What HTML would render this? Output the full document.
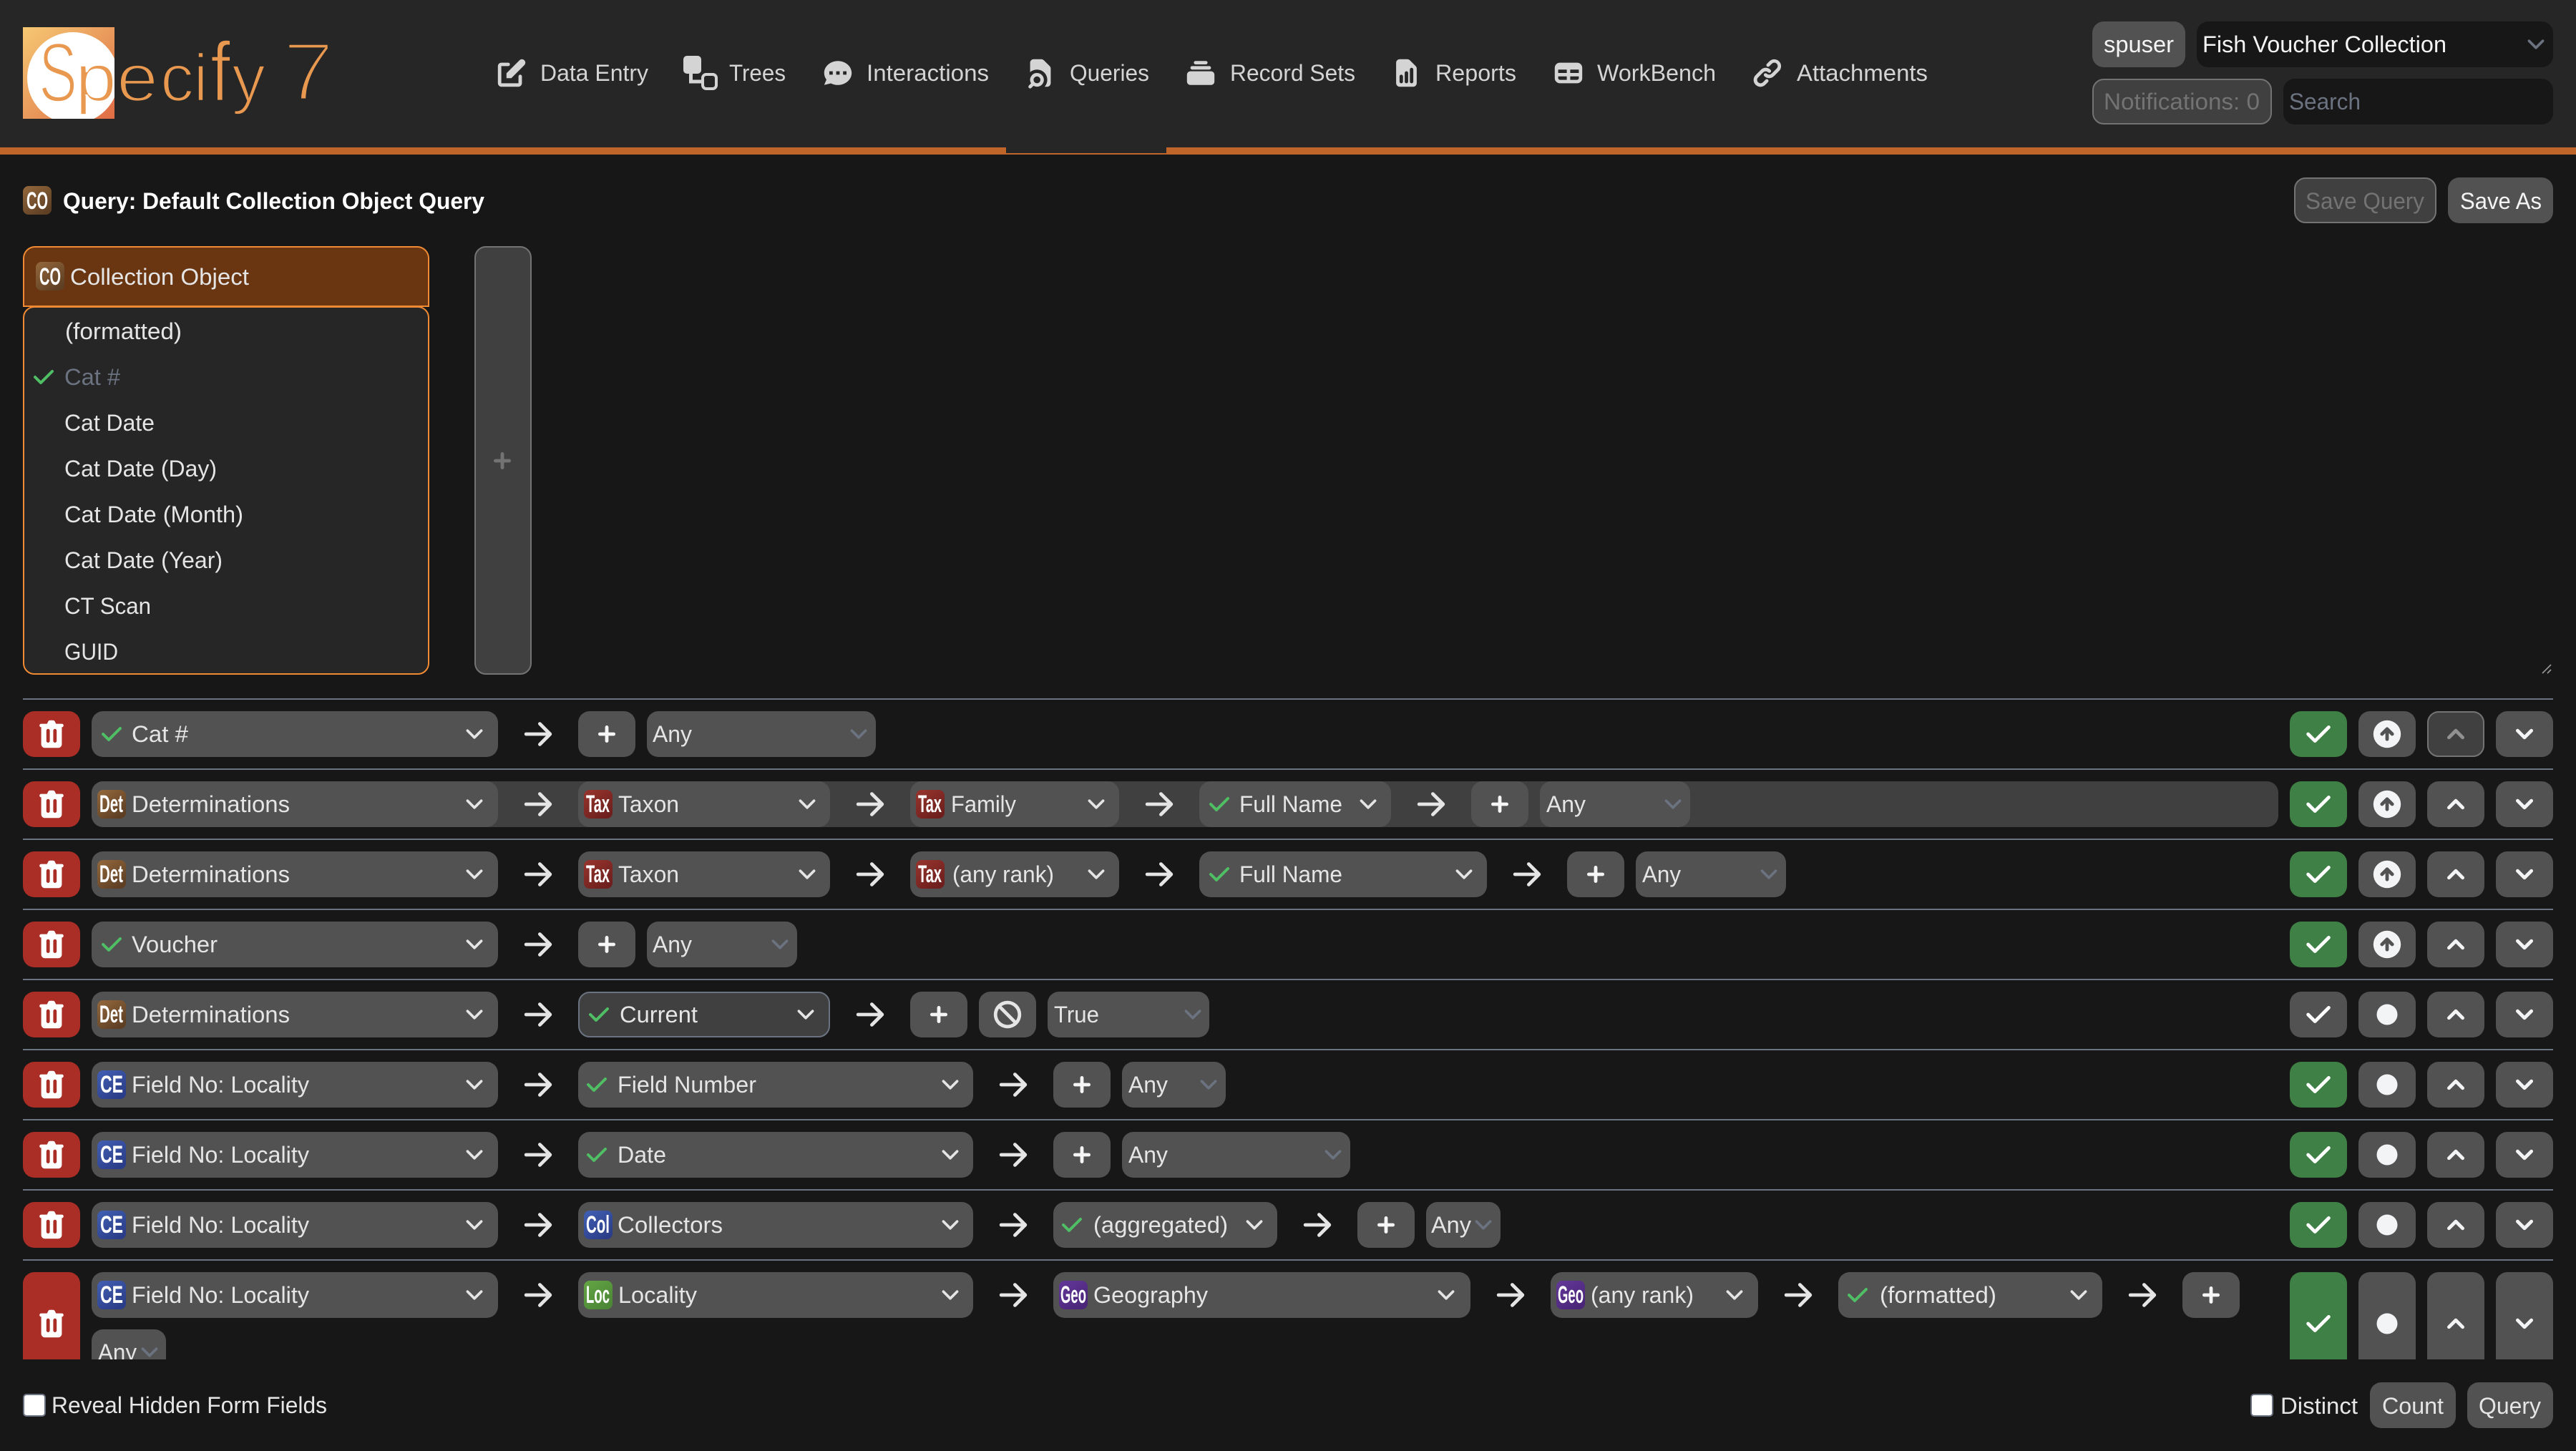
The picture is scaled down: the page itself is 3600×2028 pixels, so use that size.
<!DOCTYPE html>
<html lang="en"><head><meta charset="utf-8"><title>Specify 7</title>
<style>
html,body{margin:0;padding:0;background:#171717;width:3600px;height:2028px;overflow:hidden}
svg{display:block}
text{font:32px "Liberation Sans",Arial,sans-serif;fill:#e5e5e5}
.n{fill:#d4d4d4}
.b{font-weight:700;fill:#fff}
.w{fill:#f5f5f5}
.dim{fill:#737373}
.ph{fill:#6b7280}
.ic{font-weight:700;font-size:34px;fill:#fff}
.s{fill:#525252}
.del{fill:#aa2e26}
.grn{fill:#3f8046}
.cw{stroke:#e5e5e5}
.cg{stroke:#6b7280}
.lg{fill:#e9984f}
</style></head><body>
<svg xmlns="http://www.w3.org/2000/svg" width="3600" height="2028" viewBox="0 0 3600 2028">
<defs>
<linearGradient id="lg" x1="0" y1="0" x2="1" y2="1"><stop offset="0" stop-color="#f6c873"/><stop offset=".5" stop-color="#e99a5c"/><stop offset="1" stop-color="#e06c45"/></linearGradient>
<linearGradient id="gCO" x1="0" y1="0" x2=".7" y2="1"><stop offset="0" stop-color="#94683c"/><stop offset="1" stop-color="#5e3f24"/></linearGradient>
<linearGradient id="gTax" x1="0" y1="0" x2=".7" y2="1"><stop offset="0" stop-color="#97352e"/><stop offset="1" stop-color="#6e1f1d"/></linearGradient>
<linearGradient id="gCE" x1="0" y1="0" x2=".7" y2="1"><stop offset="0" stop-color="#4260b4"/><stop offset="1" stop-color="#2b3d88"/></linearGradient>
<linearGradient id="gLoc" x1="0" y1="0" x2=".7" y2="1"><stop offset="0" stop-color="#64a544"/><stop offset="1" stop-color="#4c8736"/></linearGradient>
<linearGradient id="gGeo" x1="0" y1="0" x2=".7" y2="1"><stop offset="0" stop-color="#64399a"/><stop offset="1" stop-color="#4a2578"/></linearGradient>
<clipPath id="cl"><rect x="32" y="38" width="128" height="128"/></clipPath>

<path id="trash" fill="#fff" transform="scale(2.4)" fill-rule="evenodd" d="M9 2a1 1 0 00-.894.553L7.382 4H4a1 1 0 000 2v10a2 2 0 002 2h8a2 2 0 002-2V6a1 1 0 100-2h-3.382l-.724-1.447A1 1 0 0011 2H9zM7 8a1 1 0 012 0v6a1 1 0 11-2 0V8zm5-1a1 1 0 00-1 1v6a1 1 0 102 0V8a1 1 0 00-1-1z"/>
<path id="upc" fill="#f3f4f6" transform="scale(2.4)" fill-rule="evenodd" d="M10 18a8 8 0 100-16 8 8 0 000 16zm3.707-8.707l-3-3a1 1 0 00-1.414 0l-3 3a1 1 0 001.414 1.414L9 9.414V13a1 1 0 102 0V9.414l1.293 1.293a1 1 0 001.414-1.414z"/>
<path id="chk" fill="#fff" transform="scale(2.4)" d="M16.707 5.293a1 1 0 010 1.414l-8 8a1 1 0 01-1.414 0l-4-4a1 1 0 011.414-1.414L8 12.586l7.293-7.293a1 1 0 011.414 0z"/>
<path id="chk2" fill="#4fbe64" transform="scale(2)" d="M16.707 5.293a1 1 0 010 1.414l-8 8a1 1 0 01-1.414 0l-4-4a1 1 0 011.414-1.414L8 12.586l7.293-7.293a1 1 0 011.414 0z"/>
<path id="up" fill="#f3f4f6" transform="scale(2.4)" d="M14.707 12.707a1 1 0 01-1.414 0L10 9.414l-3.293 3.293a1 1 0 01-1.414-1.414l4-4a1 1 0 011.414 0l4 4a1 1 0 010 1.414z"/>
<path id="dn" fill="#f3f4f6" transform="scale(2.4)" d="M5.293 7.293a1 1 0 011.414 0L10 10.586l3.293-3.293a1 1 0 111.414 1.414l-4 4a1 1 0 01-1.414 0l-4-4a1 1 0 010-1.414z"/>
<path id="plus" transform="scale(2.4)" d="M10 5a1 1 0 011 1v3h3a1 1 0 110 2h-3v3a1 1 0 11-2 0v-3H6a1 1 0 110-2h3V6a1 1 0 011-1z"/>
<path id="arr" fill="#e5e5e5" transform="scale(2.4)" d="M10.293 3.293a1 1 0 011.414 0l6 6a1 1 0 010 1.414l-6 6a1 1 0 01-1.414-1.414L14.586 11H3a1 1 0 110-2h11.586l-4.293-4.293a1 1 0 010-1.414z"/>
<path id="ban" fill="#e5e5e5" transform="scale(2.4)" fill-rule="evenodd" d="M13.477 14.89A6 6 0 015.11 6.524l8.367 8.368zm1.414-1.414L6.524 5.11a6 6 0 018.367 8.367zM18 10a8 8 0 11-16 0 8 8 0 0116 0z"/>
<path id="cv" fill="none" stroke-width="1.5" stroke-linecap="round" stroke-linejoin="round" transform="scale(2.4)" d="M6 8l4 4 4-4"/>

<g id="del"><rect x="32" width="80" height="64" rx="16" class="del"/><use href="#trash" x="48" y="8"/></g>
<g id="pb"><rect width="80" height="64" rx="16" class="s"/><use href="#plus" x="16" y="8" fill="#f5f5f5"/></g>
<g id="ud">
<rect x="3392" width="80" height="64" rx="16" class="s"/><use href="#up" x="3408" y="8"/>
<rect x="3488" width="80" height="64" rx="16" class="s"/><use href="#dn" x="3504" y="8"/>
</g>
<g id="a1">
<rect x="3200" width="80" height="64" rx="16" class="grn"/><use href="#chk" x="3216" y="8"/>
<rect x="3296" width="80" height="64" rx="16" class="s"/><use href="#upc" x="3312" y="8"/>
<use href="#ud"/>
</g>
<g id="a2">
<rect x="3200" width="80" height="64" rx="16" class="grn"/><use href="#chk" x="3216" y="8"/>
<rect x="3296" width="80" height="64" rx="16" class="s"/><circle cx="3336" cy="32" r="14.5" fill="#f3f4f6"/>
<use href="#ud"/>
</g>
<g id="s1"><rect x="128" width="568" height="64" rx="16" class="s"/><use href="#cv" class="cw" x="639" y="8"/></g>
</defs>

<rect width="3600" height="2028" fill="#171717"/>
<!-- header -->
<rect width="3600" height="206" fill="#262626"/>
<rect y="206" width="3600" height="10" fill="#c0652a"/>
<rect x="1406" y="206" width="224" height="8" fill="#262626"/>

<!-- logo -->
<rect x="32" y="38" width="128" height="128" fill="url(#lg)"/>
<circle cx="102" cy="109" r="64" fill="#fff" clip-path="url(#cl)"/>
<g clip-path="url(#cl)">
<text class="lg" x="54" y="142" style="font-size:118px;stroke:#fff;stroke-width:3.5" textLength="54" lengthAdjust="spacingAndGlyphs">S</text>
<text class="lg" x="105" y="141" style="font-size:94px;stroke:#fff;stroke-width:2.6" textLength="58" lengthAdjust="spacingAndGlyphs">p</text>
</g>
<text class="lg" x="163" y="141" style="font-size:94px;stroke:#262626;stroke-width:2.8" textLength="58" lengthAdjust="spacingAndGlyphs">e</text>
<text class="lg" x="224" y="141" style="font-size:94px;stroke:#262626;stroke-width:2.8" textLength="47" lengthAdjust="spacingAndGlyphs">c</text>
<text class="lg" x="271" y="141" style="font-size:94px;stroke:#262626;stroke-width:2.4" textLength="19" lengthAdjust="spacingAndGlyphs">i</text>
<text class="lg" x="294" y="141" style="font-size:118px;stroke:#262626;stroke-width:2.6" textLength="28" lengthAdjust="spacingAndGlyphs">f</text>
<text class="lg" x="324" y="141" style="font-size:94px;stroke:#262626;stroke-width:2.8" textLength="47" lengthAdjust="spacingAndGlyphs">y</text>
<text class="lg" x="395" y="140" style="font-size:116px;stroke:#262626;stroke-width:5" textLength="72" lengthAdjust="spacingAndGlyphs">7</text>

<!-- nav -->
<g fill="#d4d4d4">
<g transform="translate(691,78) scale(2.4)"><path d="M17.414 2.586a2 2 0 00-2.828 0L7 10.172V13h2.828l7.586-7.586a2 2 0 000-2.828z"/><path fill-rule="evenodd" d="M2 6a2 2 0 012-2h4a1 1 0 010 2H4v10h10v-4a1 1 0 112 0v4a2 2 0 01-2 2H4a2 2 0 01-2-2V6z"/></g>
<rect x="955" y="78" width="25" height="25" rx="5"/>
<path d="M965.5 102V114H983" fill="none" stroke="#d4d4d4" stroke-width="5"/>
<rect x="982" y="104" width="19" height="20" rx="5" fill="none" stroke="#d4d4d4" stroke-width="4"/>
<path transform="translate(1147,78) scale(2.4)" fill-rule="evenodd" d="M18 10c0 3.866-3.582 7-8 7a8.841 8.841 0 01-4.083-.98L2 17l1.338-3.123C2.493 12.767 2 11.434 2 10c0-3.866 3.582-7 8-7s8 3.134 8 7zM7 9H5v2h2V9zm8 0h-2v2h2V9zM9 9h2v2H9V9z"/>
<g transform="translate(1430,78) scale(2.4)"><path d="M4 4a2 2 0 012-2h4.586A2 2 0 0112 2.586L15.414 6A2 2 0 0116 7.414V16a2 2 0 01-2 2h-1.528A6 6 0 004 9.528V4z"/><path fill-rule="evenodd" d="M8 10a4 4 0 00-3.446 6.032l-1.261 1.26a1 1 0 101.414 1.415l1.261-1.261A4 4 0 108 10zm-2 4a2 2 0 114 0 2 2 0 01-4 0z"/></g>
<path transform="translate(1654,78) scale(2.4)" d="M7 3a1 1 0 000 2h6a1 1 0 100-2H7zM4 7a1 1 0 011-1h10a1 1 0 110 2H5a1 1 0 01-1-1zM2 11a2 2 0 012-2h12a2 2 0 012 2v4a2 2 0 01-2 2H4a2 2 0 01-2-2v-4z"/>
<path transform="translate(1941.5,78) scale(2.4)" fill-rule="evenodd" d="M6 2a2 2 0 00-2 2v12a2 2 0 002 2h8a2 2 0 002-2V7.414A2 2 0 0015.414 6L12 2.586A2 2 0 0010.586 2H6zm2 10a1 1 0 10-2 0v3a1 1 0 102 0v-3zm2-3a1 1 0 011 1v5a1 1 0 11-2 0v-5a1 1 0 011-1zm4-1a1 1 0 10-2 0v7a1 1 0 102 0V8z"/>
<path transform="translate(2168,78) scale(2.4)" fill-rule="evenodd" d="M5 4a3 3 0 00-3 3v6a3 3 0 003 3h10a3 3 0 003-3V7a3 3 0 00-3-3H5zm-1 9v-1h5v2H5a1 1 0 01-1-1zm7 1h4a1 1 0 001-1v-1h-5v2zm0-4h5V8h-5v2zM9 8H4v2h5V8z"/>
<path transform="translate(2446,78) scale(2.4)" fill-rule="evenodd" d="M12.586 4.586a2 2 0 112.828 2.828l-3 3a2 2 0 01-2.828 0 1 1 0 00-1.414 1.414 4 4 0 005.656 0l3-3a4 4 0 00-5.656-5.656l-1.5 1.5a1 1 0 101.414 1.414l1.5-1.5zm-5 5a2 2 0 012.828 0 1 1 0 101.414-1.414 4 4 0 00-5.656 0l-3 3a4 4 0 105.656 5.656l1.5-1.5a1 1 0 10-1.414-1.414l-1.5 1.5a2 2 0 11-2.828-2.828l3-3z"/>
</g>
<text class="n" x="755" y="113" textLength="151" lengthAdjust="spacingAndGlyphs">Data Entry</text>
<text class="n" x="1019" y="113" textLength="79" lengthAdjust="spacingAndGlyphs">Trees</text>
<text class="n" x="1211" y="113" textLength="171" lengthAdjust="spacingAndGlyphs">Interactions</text>
<text class="n" x="1495" y="113" textLength="111" lengthAdjust="spacingAndGlyphs">Queries</text>
<text class="n" x="1719" y="113" textLength="175" lengthAdjust="spacingAndGlyphs">Record Sets</text>
<text class="n" x="2006" y="113" textLength="113" lengthAdjust="spacingAndGlyphs">Reports</text>
<text class="n" x="2232" y="113" textLength="166" lengthAdjust="spacingAndGlyphs">WorkBench</text>
<text class="n" x="2511" y="113" textLength="183" lengthAdjust="spacingAndGlyphs">Attachments</text>

<!-- header right -->
<rect x="2924" y="30" width="130" height="64" rx="16" class="s"/>
<text class="w" x="2940" y="73" textLength="98" lengthAdjust="spacingAndGlyphs">spuser</text>
<rect x="3070" y="30" width="498" height="64" rx="16" fill="#171717"/>
<text class="w" x="3078" y="73" textLength="341" lengthAdjust="spacingAndGlyphs">Fish Voucher Collection</text>
<use href="#cv" class="cg" x="3520" y="38"/>
<rect x="2925" y="111" width="249" height="62" rx="15" fill="#404040" stroke="#737373" stroke-width="2"/>
<text class="dim" x="2940" y="153" textLength="218" lengthAdjust="spacingAndGlyphs">Notifications: 0</text>
<rect x="3191" y="110" width="377" height="64" rx="16" fill="#171717"/>
<text class="ph" x="3199" y="153" textLength="100" lengthAdjust="spacingAndGlyphs">Search</text>

<!-- title -->
<rect x="32" y="260" width="40" height="40" rx="8" fill="url(#gCO)"/>
<text class="ic" x="37" y="292" textLength="30" lengthAdjust="spacingAndGlyphs">CO</text>
<text class="b" x="88" y="292" textLength="589" lengthAdjust="spacingAndGlyphs">Query: Default Collection Object Query</text>
<rect x="3207" y="249" width="197" height="62" rx="15" fill="#404040" stroke="#737373" stroke-width="2"/>
<text class="dim" x="3222" y="292" textLength="166" lengthAdjust="spacingAndGlyphs">Save Query</text>
<rect x="3421" y="248" width="147" height="64" rx="16" class="s"/>
<text class="w" x="3438" y="292" textLength="114" lengthAdjust="spacingAndGlyphs">Save As</text>

<!-- tree panel -->
<path d="M33 428V361a16 16 0 0 1 16-16H583a16 16 0 0 1 16 16V428Z" fill="#6a3612" stroke="#f08a33" stroke-width="2"/>
<rect x="50" y="366" width="40" height="40" rx="8" fill="url(#gCO)"/>
<text class="ic" x="55" y="398" textLength="30" lengthAdjust="spacingAndGlyphs">CO</text>
<text x="98" y="398" textLength="250" lengthAdjust="spacingAndGlyphs">Collection Object</text>
<rect x="33" y="429" width="566" height="513" rx="15" fill="#262626" stroke="#f08a33" stroke-width="2"/>
<text x="91" y="474" textLength="163" lengthAdjust="spacingAndGlyphs">(formatted)</text>
<use href="#chk2" x="41" y="507"/>
<text class="ph" x="90" y="538" textLength="78" lengthAdjust="spacingAndGlyphs">Cat #</text>
<text x="90" y="602" textLength="126" lengthAdjust="spacingAndGlyphs">Cat Date</text>
<text x="90" y="666" textLength="213" lengthAdjust="spacingAndGlyphs">Cat Date (Day)</text>
<text x="90" y="730" textLength="250" lengthAdjust="spacingAndGlyphs">Cat Date (Month)</text>
<text x="90" y="794" textLength="221" lengthAdjust="spacingAndGlyphs">Cat Date (Year)</text>
<text x="90" y="858" textLength="121" lengthAdjust="spacingAndGlyphs">CT Scan</text>
<text x="90" y="922" textLength="75" lengthAdjust="spacingAndGlyphs">GUID</text>

<rect x="664" y="345" width="78" height="597" rx="15" fill="#404040" stroke="#737373" stroke-width="2"/>
<use href="#plus" x="678" y="620" fill="#737373"/>
<path d="M3553 941L3565 929M3560 941L3565 936" stroke="#9a9a9a" stroke-width="1.6" fill="none"/>

<!-- separators -->
<g fill="#6b7280">
<rect x="32" y="976" width="3536" height="2"/><rect x="32" y="1074" width="3536" height="2"/><rect x="32" y="1172" width="3536" height="2"/><rect x="32" y="1270" width="3536" height="2"/><rect x="32" y="1368" width="3536" height="2"/><rect x="32" y="1466" width="3536" height="2"/><rect x="32" y="1564" width="3536" height="2"/><rect x="32" y="1662" width="3536" height="2"/><rect x="32" y="1760" width="3536" height="2"/>
</g>

<!-- row 1 -->
<g transform="translate(0,994)">
<use href="#del"/><use href="#a1"/>
<rect x="3393" y="1" width="78" height="62" rx="15" fill="#404040" stroke="#737373" stroke-width="2"/><use href="#up" x="3408" y="8" style="opacity:.45"/>
<use href="#s1"/><use href="#chk2" x="136" y="12"/>
<text x="184" y="43" textLength="79" lengthAdjust="spacingAndGlyphs">Cat #</text>
<use href="#arr" x="728" y="8"/><use href="#pb" x="808"/>
<rect x="904" width="320" height="64" rx="16" class="s"/>
<text x="912" y="43" textLength="55" lengthAdjust="spacingAndGlyphs">Any</text><use href="#cv" class="cg" x="1176" y="8"/>
</g>

<!-- row 2 -->
<g transform="translate(0,1092)">
<rect x="128" width="3056" height="64" rx="16" fill="#404040"/>
<use href="#del"/><use href="#a1"/>
<use href="#s1"/>
<rect x="136" y="12" width="40" height="40" rx="8" fill="url(#gCO)"/><text class="ic" x="139" y="43" textLength="33" lengthAdjust="spacingAndGlyphs">Det</text>
<text x="184" y="43" textLength="221" lengthAdjust="spacingAndGlyphs">Determinations</text>
<use href="#arr" x="728" y="8"/>
<rect x="808" width="352" height="64" rx="16" class="s"/>
<rect x="816" y="12" width="40" height="40" rx="8" fill="url(#gTax)"/><text class="ic" x="819" y="43" textLength="33" lengthAdjust="spacingAndGlyphs">Tax</text>
<text x="864" y="43" textLength="85" lengthAdjust="spacingAndGlyphs">Taxon</text><use href="#cv" class="cw" x="1104" y="8"/>
<use href="#arr" x="1192" y="8"/>
<rect x="1272" width="292" height="64" rx="16" class="s"/>
<rect x="1280" y="12" width="40" height="40" rx="8" fill="url(#gTax)"/><text class="ic" x="1283" y="43" textLength="33" lengthAdjust="spacingAndGlyphs">Tax</text>
<text x="1329" y="43" textLength="91" lengthAdjust="spacingAndGlyphs">Family</text><use href="#cv" class="cw" x="1508" y="8"/>
<use href="#arr" x="1596" y="8"/>
<rect x="1676" width="268" height="64" rx="16" class="s"/>
<use href="#chk2" x="1684" y="12"/>
<text x="1732" y="43" textLength="144" lengthAdjust="spacingAndGlyphs">Full Name</text><use href="#cv" class="cw" x="1888" y="8"/>
<use href="#arr" x="1976" y="8"/><use href="#pb" x="2056"/>
<rect x="2152" width="210" height="64" rx="16" class="s"/>
<text x="2161" y="43" textLength="55" lengthAdjust="spacingAndGlyphs">Any</text><use href="#cv" class="cg" x="2314" y="8"/>
</g>

<!-- row 3 -->
<g transform="translate(0,1190)">
<use href="#del"/><use href="#a1"/>
<use href="#s1"/>
<rect x="136" y="12" width="40" height="40" rx="8" fill="url(#gCO)"/><text class="ic" x="139" y="43" textLength="33" lengthAdjust="spacingAndGlyphs">Det</text>
<text x="184" y="43" textLength="221" lengthAdjust="spacingAndGlyphs">Determinations</text>
<use href="#arr" x="728" y="8"/>
<rect x="808" width="352" height="64" rx="16" class="s"/>
<rect x="816" y="12" width="40" height="40" rx="8" fill="url(#gTax)"/><text class="ic" x="819" y="43" textLength="33" lengthAdjust="spacingAndGlyphs">Tax</text>
<text x="864" y="43" textLength="85" lengthAdjust="spacingAndGlyphs">Taxon</text><use href="#cv" class="cw" x="1104" y="8"/>
<use href="#arr" x="1192" y="8"/>
<rect x="1272" width="292" height="64" rx="16" class="s"/>
<rect x="1280" y="12" width="40" height="40" rx="8" fill="url(#gTax)"/><text class="ic" x="1283" y="43" textLength="33" lengthAdjust="spacingAndGlyphs">Tax</text>
<text x="1331" y="43" textLength="142" lengthAdjust="spacingAndGlyphs">(any rank)</text><use href="#cv" class="cw" x="1508" y="8"/>
<use href="#arr" x="1596" y="8"/>
<rect x="1676" width="402" height="64" rx="16" class="s"/>
<use href="#chk2" x="1684" y="12"/>
<text x="1732" y="43" textLength="144" lengthAdjust="spacingAndGlyphs">Full Name</text><use href="#cv" class="cw" x="2022" y="8"/>
<use href="#arr" x="2110" y="8"/><use href="#pb" x="2190"/>
<rect x="2286" width="210" height="64" rx="16" class="s"/>
<text x="2295" y="43" textLength="54" lengthAdjust="spacingAndGlyphs">Any</text><use href="#cv" class="cg" x="2448" y="8"/>
</g>

<!-- row 4 -->
<g transform="translate(0,1288)">
<use href="#del"/><use href="#a1"/>
<use href="#s1"/><use href="#chk2" x="136" y="12"/>
<text x="184" y="43" textLength="120" lengthAdjust="spacingAndGlyphs">Voucher</text>
<use href="#arr" x="728" y="8"/><use href="#pb" x="808"/>
<rect x="904" width="210" height="64" rx="16" class="s"/>
<text x="912" y="43" textLength="55" lengthAdjust="spacingAndGlyphs">Any</text><use href="#cv" class="cg" x="1066" y="8"/>
</g>

<!-- row 5 -->
<g transform="translate(0,1386)">
<use href="#del"/>
<rect x="3200" width="80" height="64" rx="16" class="s"/><use href="#chk" x="3216" y="8"/>
<rect x="3296" width="80" height="64" rx="16" class="s"/><circle cx="3336" cy="32" r="14.5" fill="#f3f4f6"/>
<use href="#ud"/>
<use href="#s1"/>
<rect x="136" y="12" width="40" height="40" rx="8" fill="url(#gCO)"/><text class="ic" x="139" y="43" textLength="33" lengthAdjust="spacingAndGlyphs">Det</text>
<text x="184" y="43" textLength="221" lengthAdjust="spacingAndGlyphs">Determinations</text>
<use href="#arr" x="728" y="8"/>
<rect x="809" y="1" width="350" height="62" rx="15" fill="#404040" stroke="#6b7280" stroke-width="2"/>
<use href="#chk2" x="817" y="12"/>
<text x="866" y="43" textLength="109" lengthAdjust="spacingAndGlyphs">Current</text><use href="#cv" class="cw" x="1102" y="8"/>
<use href="#arr" x="1192" y="8"/><use href="#pb" x="1272"/>
<rect x="1368" width="80" height="64" rx="16" class="s"/><use href="#ban" x="1384" y="8"/>
<rect x="1464" width="226" height="64" rx="16" class="s"/>
<text x="1473" y="43" textLength="63" lengthAdjust="spacingAndGlyphs">True</text><use href="#cv" class="cg" x="1643" y="8"/>
</g>

<!-- row 6 -->
<g transform="translate(0,1484)">
<use href="#del"/><use href="#a2"/>
<use href="#s1"/>
<rect x="136" y="12" width="40" height="40" rx="8" fill="url(#gCE)"/><text class="ic" x="140" y="43" textLength="32" lengthAdjust="spacingAndGlyphs">CE</text>
<text x="184" y="43" textLength="248" lengthAdjust="spacingAndGlyphs">Field No: Locality</text>
<use href="#arr" x="728" y="8"/>
<rect x="808" width="552" height="64" rx="16" class="s"/>
<use href="#chk2" x="814" y="12"/>
<text x="863" y="43" textLength="194" lengthAdjust="spacingAndGlyphs">Field Number</text><use href="#cv" class="cw" x="1304" y="8"/>
<use href="#arr" x="1392" y="8"/><use href="#pb" x="1472"/>
<rect x="1568" width="145" height="64" rx="16" class="s"/>
<text x="1577" y="43" textLength="55" lengthAdjust="spacingAndGlyphs">Any</text><use href="#cv" class="cg" x="1665" y="8"/>
</g>

<!-- row 7 -->
<g transform="translate(0,1582)">
<use href="#del"/><use href="#a2"/>
<use href="#s1"/>
<rect x="136" y="12" width="40" height="40" rx="8" fill="url(#gCE)"/><text class="ic" x="140" y="43" textLength="32" lengthAdjust="spacingAndGlyphs">CE</text>
<text x="184" y="43" textLength="248" lengthAdjust="spacingAndGlyphs">Field No: Locality</text>
<use href="#arr" x="728" y="8"/>
<rect x="808" width="552" height="64" rx="16" class="s"/>
<use href="#chk2" x="814" y="12"/>
<text x="863" y="43" textLength="68" lengthAdjust="spacingAndGlyphs">Date</text><use href="#cv" class="cw" x="1304" y="8"/>
<use href="#arr" x="1392" y="8"/><use href="#pb" x="1472"/>
<rect x="1568" width="319" height="64" rx="16" class="s"/>
<text x="1577" y="43" textLength="55" lengthAdjust="spacingAndGlyphs">Any</text><use href="#cv" class="cg" x="1839" y="8"/>
</g>

<!-- row 8 -->
<g transform="translate(0,1680)">
<use href="#del"/><use href="#a2"/>
<use href="#s1"/>
<rect x="136" y="12" width="40" height="40" rx="8" fill="url(#gCE)"/><text class="ic" x="140" y="43" textLength="32" lengthAdjust="spacingAndGlyphs">CE</text>
<text x="184" y="43" textLength="248" lengthAdjust="spacingAndGlyphs">Field No: Locality</text>
<use href="#arr" x="728" y="8"/>
<rect x="808" width="552" height="64" rx="16" class="s"/>
<rect x="816" y="12" width="40" height="40" rx="8" fill="url(#gCE)"/><text class="ic" x="819" y="43" textLength="33" lengthAdjust="spacingAndGlyphs">Col</text>
<text x="863" y="43" textLength="147" lengthAdjust="spacingAndGlyphs">Collectors</text><use href="#cv" class="cw" x="1304" y="8"/>
<use href="#arr" x="1392" y="8"/>
<rect x="1472" width="313" height="64" rx="16" class="s"/>
<use href="#chk2" x="1478" y="12"/>
<text x="1528" y="43" textLength="188" lengthAdjust="spacingAndGlyphs">(aggregated)</text><use href="#cv" class="cw" x="1729" y="8"/>
<use href="#arr" x="1817" y="8"/><use href="#pb" x="1897"/>
<rect x="1993" width="104" height="64" rx="16" class="s"/>
<text x="2000" y="43" textLength="56" lengthAdjust="spacingAndGlyphs">Any</text><use href="#cv" class="cg" x="2049" y="8"/>
</g>

<!-- row 9 -->
<g transform="translate(0,1778)">
<rect x="32" width="80" height="144" rx="16" class="del"/><use href="#trash" x="48" y="48"/>
<rect x="3200" width="80" height="144" rx="16" class="grn"/><use href="#chk" x="3216" y="48"/>
<rect x="3296" width="80" height="144" rx="16" class="s"/><circle cx="3336" cy="72" r="14.5" fill="#f3f4f6"/>
<rect x="3392" width="80" height="144" rx="16" class="s"/><use href="#up" x="3408" y="48"/>
<rect x="3488" width="80" height="144" rx="16" class="s"/><use href="#dn" x="3504" y="48"/>
<use href="#s1"/>
<rect x="136" y="12" width="40" height="40" rx="8" fill="url(#gCE)"/><text class="ic" x="140" y="43" textLength="32" lengthAdjust="spacingAndGlyphs">CE</text>
<text x="184" y="43" textLength="248" lengthAdjust="spacingAndGlyphs">Field No: Locality</text>
<use href="#arr" x="728" y="8"/>
<rect x="808" width="552" height="64" rx="16" class="s"/>
<rect x="816" y="12" width="40" height="40" rx="8" fill="url(#gLoc)"/><text class="ic" x="819" y="43" textLength="33" lengthAdjust="spacingAndGlyphs">Loc</text>
<text x="864" y="43" textLength="110" lengthAdjust="spacingAndGlyphs">Locality</text><use href="#cv" class="cw" x="1304" y="8"/>
<use href="#arr" x="1392" y="8"/>
<rect x="1472" width="583" height="64" rx="16" class="s"/>
<rect x="1480" y="12" width="40" height="40" rx="8" fill="url(#gGeo)"/><text class="ic" x="1482" y="43" textLength="36" lengthAdjust="spacingAndGlyphs">Geo</text>
<text x="1528" y="43" textLength="160" lengthAdjust="spacingAndGlyphs">Geography</text><use href="#cv" class="cw" x="1997" y="8"/>
<use href="#arr" x="2087" y="8"/>
<rect x="2167" width="290" height="64" rx="16" class="s"/>
<rect x="2175" y="12" width="40" height="40" rx="8" fill="url(#gGeo)"/><text class="ic" x="2177" y="43" textLength="36" lengthAdjust="spacingAndGlyphs">Geo</text>
<text x="2223" y="43" textLength="144" lengthAdjust="spacingAndGlyphs">(any rank)</text><use href="#cv" class="cw" x="2400" y="8"/>
<use href="#arr" x="2489" y="8"/>
<rect x="2569" width="369" height="64" rx="16" class="s"/>
<use href="#chk2" x="2576" y="12"/>
<text x="2627" y="43" textLength="163" lengthAdjust="spacingAndGlyphs">(formatted)</text><use href="#cv" class="cw" x="2881" y="8"/>
<use href="#arr" x="2970" y="8"/><use href="#pb" x="3050"/>
<rect x="128" y="80" width="104" height="64" rx="16" class="s"/>
<text x="137" y="123" textLength="54" lengthAdjust="spacingAndGlyphs">Any</text><use href="#cv" class="cg" x="185" y="88"/>
</g>
<rect y="1900" width="3600" height="128" fill="#171717"/>

<!-- footer -->
<rect x="33" y="1949" width="30" height="30" rx="4" fill="#fff" stroke="#6b7280" stroke-width="2"/>
<text x="72" y="1975" textLength="385" lengthAdjust="spacingAndGlyphs">Reveal Hidden Form Fields</text>
<rect x="3146" y="1949" width="30" height="30" rx="4" fill="#fff" stroke="#6b7280" stroke-width="2"/>
<text x="3187" y="1976" textLength="108" lengthAdjust="spacingAndGlyphs">Distinct</text>
<rect x="3312" y="1932" width="120" height="64" rx="16" class="s"/>
<text x="3329" y="1976" textLength="86" lengthAdjust="spacingAndGlyphs">Count</text>
<rect x="3448" y="1932" width="120" height="64" rx="16" class="s"/>
<text x="3464" y="1976" textLength="87" lengthAdjust="spacingAndGlyphs">Query</text>
</svg>
</body></html>
